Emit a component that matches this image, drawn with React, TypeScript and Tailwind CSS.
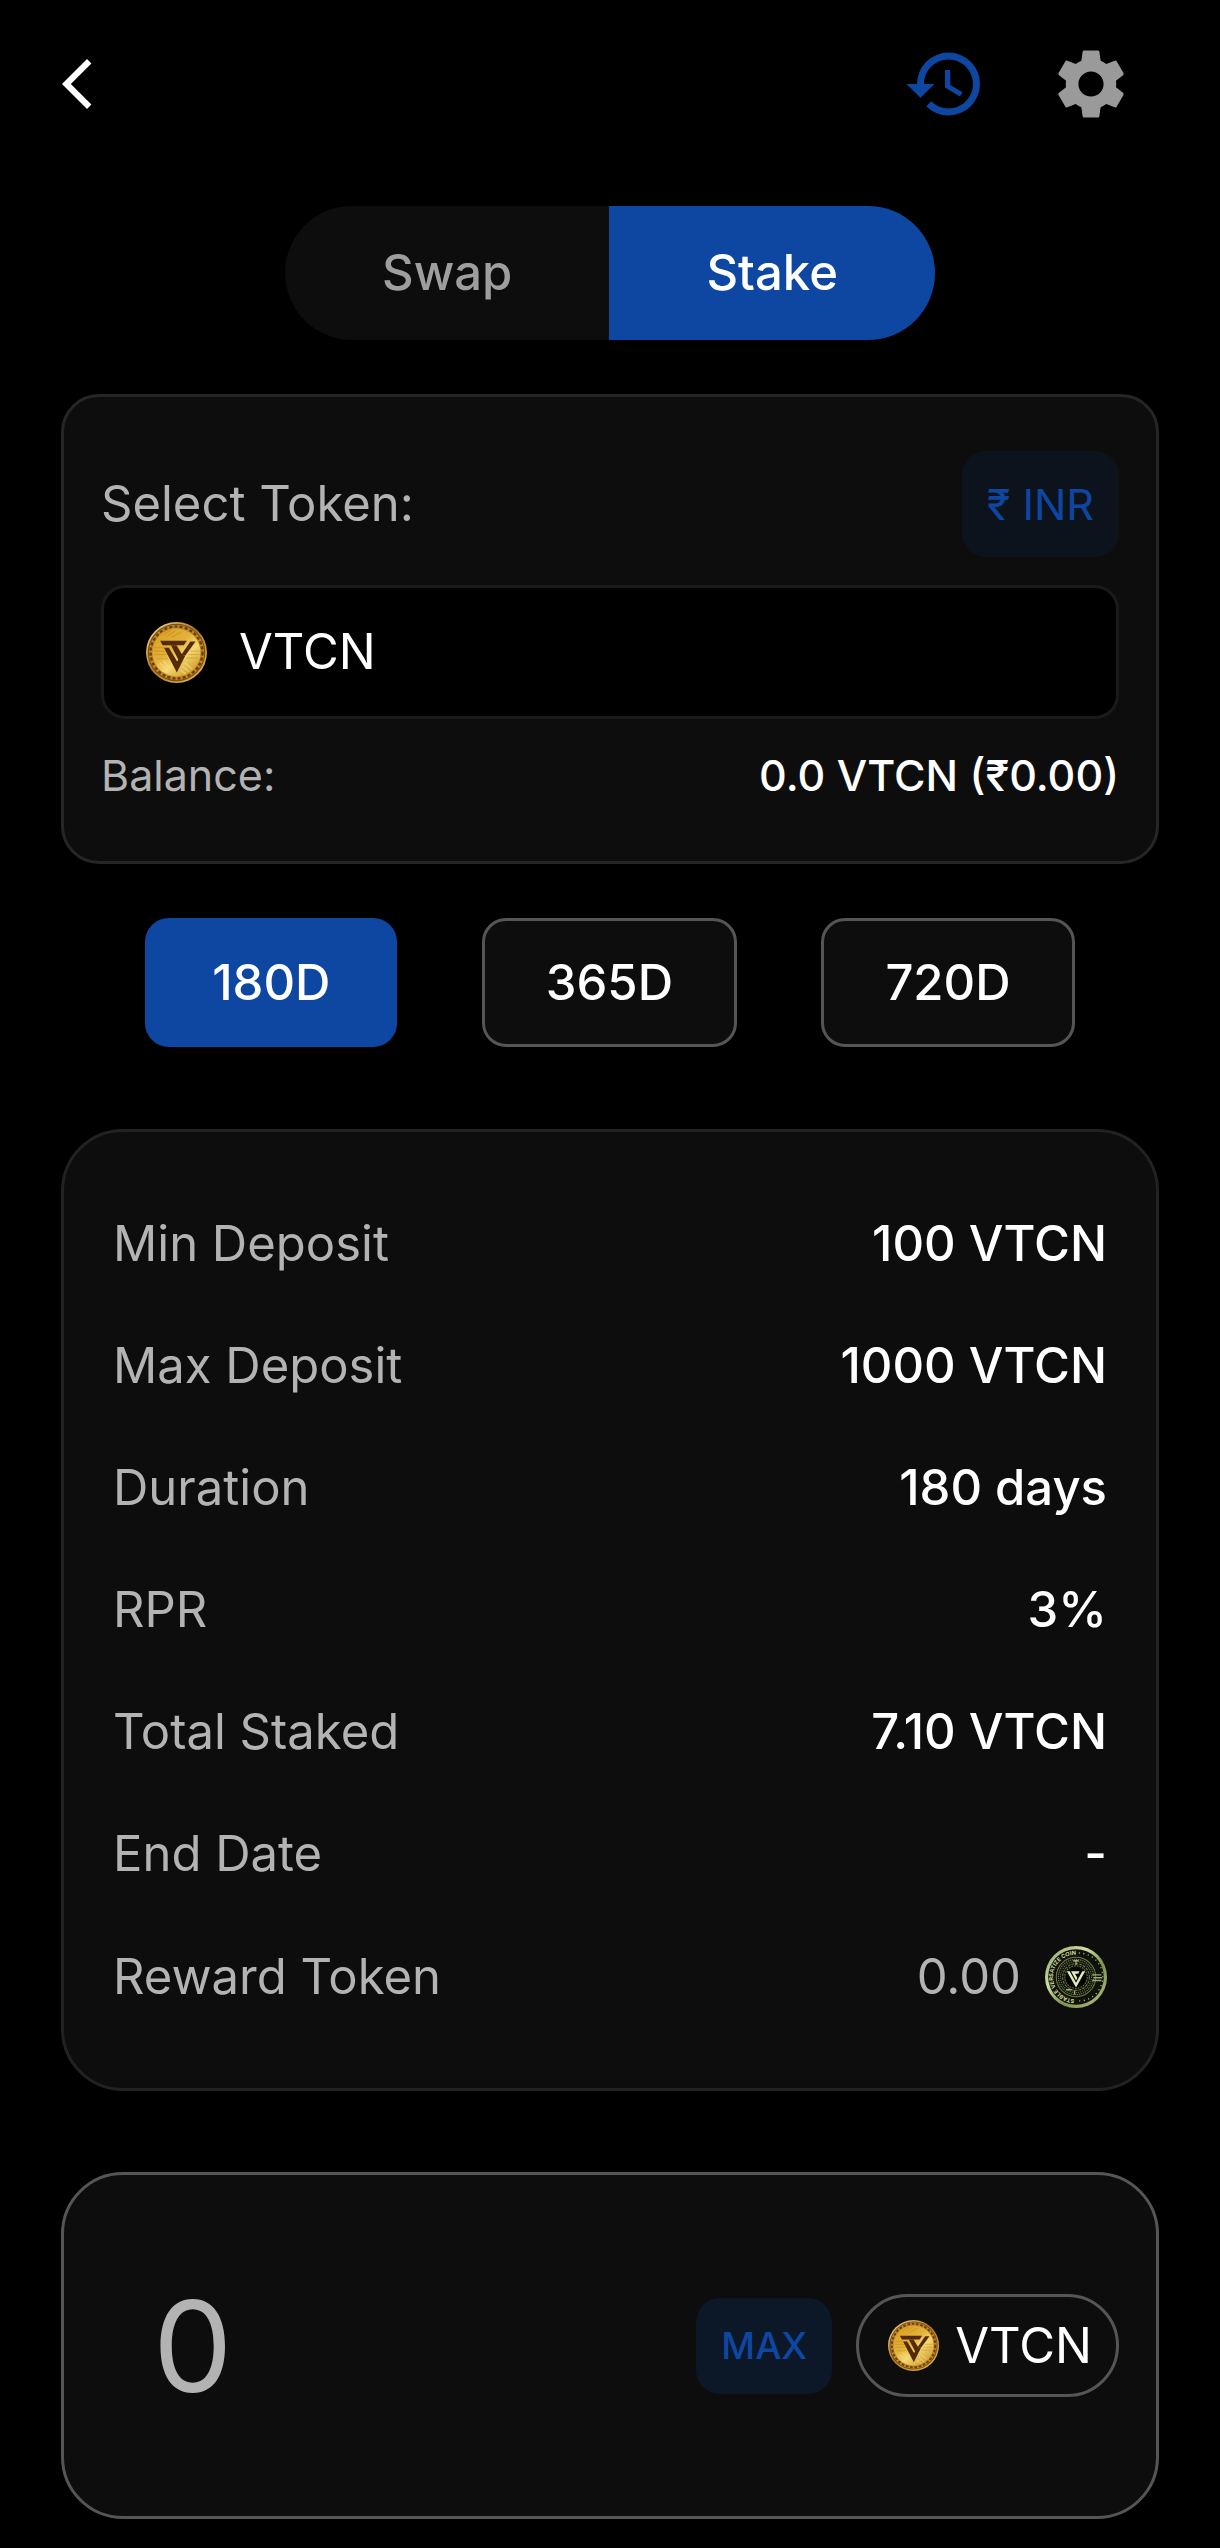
import React, { useId, useState } from "react";
import { MdArrowBackIosNew, MdHistory, MdSettings } from "react-icons/md";

function GoldCoin({ className }: { className: string }) {
  const id = useId();
  return (
    <svg viewBox="0 0 176 176" className={className} aria-hidden="true">
      <defs>
        <linearGradient id={`${id}rim`} x1="0" y1="0" x2="1" y2="1">
          <stop offset="0" stopColor="#fbe9a6" />
          <stop offset="0.45" stopColor="#b07a22" />
          <stop offset="1" stopColor="#e6bf62" />
        </linearGradient>
        <linearGradient id={`${id}face`} x1="0.1" y1="0" x2="0.9" y2="1">
          <stop offset="0" stopColor="#d9a021" />
          <stop offset="0.4" stopColor="#e3b13a" />
          <stop offset="0.62" stopColor="#f4d873" />
          <stop offset="1" stopColor="#c98f1b" />
        </linearGradient>
      </defs>
      <circle cx="88" cy="88" r="88" fill={`url(#${id}rim)`} />
      <circle cx="88" cy="88" r="83" fill="#7a4a10" />
      <circle cx="88" cy="88" r="80" fill="#c08a26" />
      <circle cx="88" cy="88" r="75" fill="none" stroke="#6b3f0c" strokeWidth="7" strokeDasharray="9 6" />
      <circle cx="88" cy="88" r="69" fill={`url(#${id}face)`} />
      <g fill="none" stroke="#b57d18" strokeWidth="2" opacity="0.6">
        <path d="M24 74h28M22 84h34M24 94h36M30 106h34M128 84h26M122 94h32M116 104h34" />
        <path d="M52 36l20-12M60 42l26-18M74 44l28-16" />
      </g>
      <path d="M112 118l22 18M106 128l18 16M100 138l14 12M40 118l22 22M50 112l20 24" stroke="#f8e391" strokeWidth="3" opacity="0.7" />
      <g fill="#552a06">
        <path d="M41 54H118L109 67H48Z" />
        <path d="M128 56H143L114 96H101Z" />
        <path d="M52 74H66L90 114L101 96H114L89 146Z" />
        <path d="M72 67H88L108 100L97 116Z" />
      </g>
    </svg>
  );
}

function GreenCoin({ className }: { className: string }) {
  const id = useId();
  return (
    <svg viewBox="0 0 176 176" className={className} aria-hidden="true">
      <defs>
        <linearGradient id={`${id}rim`} x1="0" y1="0" x2="1" y2="1">
          <stop offset="0" stopColor="#8c9a63" />
          <stop offset="0.35" stopColor="#d3dfa2" />
          <stop offset="0.6" stopColor="#7f9150" />
          <stop offset="1" stopColor="#b4c684" />
        </linearGradient>
        <path id={`${id}arc`} d="M84 151A63 63 0 0 1 88 25" />
      </defs>
      <circle cx="88" cy="88" r="88" fill={`url(#${id}rim)`} />
      <circle cx="88" cy="88" r="79" fill="#0f120b" />
      <text fill="#cddb9c" fontFamily="Inter, sans-serif" fontWeight="700" fontSize="16">
        <textPath href={`#${id}arc`}>STABLE VERSATIZE COIN</textPath>
      </text>
      <path d="M96 20A68 68 0 0 1 96 156" fill="none" stroke="#a9b87a" strokeWidth="4" strokeDasharray="3 10" />
      <g fill="none" stroke="#6b7749" strokeWidth="3">
        <circle cx="88" cy="88" r="56" />
        <circle cx="88" cy="88" r="50" strokeDasharray="4 2" />
        <circle cx="88" cy="88" r="44" strokeDasharray="3 3" />
        <circle cx="88" cy="88" r="38" strokeDasharray="8 3" />
        <circle cx="88" cy="88" r="32" strokeDasharray="5 3" />
      </g>
      <circle cx="88" cy="90" r="29" fill="#050604" />
      <path d="M80 42h16M88 42v12M134 82h26M138 90h24M134 98h26M60 124h16M84 126v12" stroke="#9dab70" strokeWidth="4" fill="none" />
      <g fill="#e2ecc0">
        <path d="M62 72H70L88 104L106 72H114L88 118Z" />
        <path d="M74 72H98L94 79H85L92 91L88 98Z" />
      </g>
    </svg>
  );
}

const plans = [180, 365, 720];

export default function App() {
  const [tab, setTab] = useState("Stake");
  const [plan, setPlan] = useState(180);
  const [amount, setAmount] = useState("");

  const details = [
    ["Min Deposit", "100 VTCN"],
    ["Max Deposit", "1000 VTCN"],
    ["Duration", `${plan} days`],
    ["RPR", "3%"],
    ["Total Staked", "7.10 VTCN"],
    ["End Date", "-"],
  ];

  return (
    <main className="min-h-screen bg-black px-[61px] pb-[30px] font-['Inter','Noto_Sans',sans-serif] text-[49px] leading-[60px] text-white">
      <header className="mr-[26px] -ml-[14px] flex items-center justify-between pt-[42px] pb-20">
        <button type="button" aria-label="Back">
          <MdArrowBackIosNew className="size-[60px]" />
        </button>
        <div className="flex gap-[62px]">
          <button type="button" aria-label="History" className="text-[#0d47a1]">
            <MdHistory className="size-[84px]" />
          </button>
          <button type="button" aria-label="Settings" className="text-[#9a9a9a]">
            <MdSettings className="size-[84px]" />
          </button>
        </div>
      </header>

      <div className="mx-auto flex w-[650px] max-w-full overflow-hidden rounded-full bg-[#0d0d0d]">
        {["Swap", "Stake"].map((name) => (
          <button
            key={name}
            type="button"
            aria-pressed={tab === name}
            onClick={() => setTab(name)}
            className={`h-[134px] flex-auto font-medium ${tab === name ? "bg-[#0d47a1] text-white" : "text-[#9e9e9e]"}`}
          >
            {name}
          </button>
        ))}
      </div>

      <section className="mt-[54px] rounded-[38px] border-3 border-[#262626] bg-[#0d0d0d] px-[37px] pt-[54px] pb-14">
        <div className="flex items-center justify-between">
          <h2 id="token-label" className="text-[#b3b3b3]">Select Token:</h2>
          <button type="button" className="h-[106px] rounded-3xl bg-[#0d131c] px-[25px] text-[43px] text-[#0d47a1]">
            ₹ INR
          </button>
        </div>
        <button
          type="button"
          aria-labelledby="token-label token-name"
          className="mt-7 flex h-[134px] w-full items-center gap-8 rounded-3xl border-3 border-[#1a1a1a] bg-black px-[42px]"
        >
          <GoldCoin className="size-[61px]" />
          <span id="token-name">VTCN</span>
        </button>
        <div className="mt-[26px] flex items-center justify-between text-[43px]">
          <span className="text-[#b3b3b3]">Balance:</span>
          <span className="font-medium">0.0 VTCN (₹0.00)</span>
        </div>
      </section>

      <div className="mt-[54px] flex flex-wrap justify-evenly">
        {plans.map((days) => (
          <button
            key={days}
            type="button"
            aria-pressed={plan === days}
            onClick={() => setPlan(days)}
            className={`h-[129px] min-w-[252px] rounded-3xl border-3 px-[61px] font-medium ${
              plan === days ? "border-[#0d47a1] bg-[#0d47a1]" : "border-[#555555] bg-[#0d0d0d]"
            }`}
          >
            {days}D
          </button>
        ))}
      </div>

      <dl className="mt-[82px] flex flex-col gap-[62px] rounded-[62px] border-3 border-[#222222] bg-[#0d0d0d] px-[49px] pt-[82px] pb-20">
        {details.map(([label, value]) => (
          <div key={label} className="flex items-center justify-between">
            <dt className="text-[#b3b3b3]">{label}</dt>
            <dd className="font-medium">{value}</dd>
          </div>
        ))}
        <div className="flex items-center justify-between text-[#b3b3b3]">
          <dt>Reward Token</dt>
          <dd className="flex items-center gap-6">
            0.00
            <GreenCoin className="size-[62px]" />
          </dd>
        </div>
      </dl>

      <section className="mt-[81px] flex h-[347px] items-center rounded-[62px] border-3 border-[#555555] bg-[#0d0d0d] pr-[37px] pl-[89px]">
        <input
          type="text"
          inputMode="decimal"
          aria-label="Amount to stake"
          placeholder="0"
          value={amount}
          onChange={(e) => setAmount(e.target.value)}
          className="h-40 min-w-0 flex-1 bg-transparent text-[126px] leading-none text-white outline-none placeholder:text-[#b3b3b3]"
        />
        <button
          type="button"
          onClick={() => setAmount("0.0")}
          className="h-24 rounded-3xl bg-[#0c1728] px-[25px] text-[37px] font-medium text-[#0d47a1]"
        >
          MAX
        </button>
        <button
          type="button"
          className="ml-6 flex h-[103px] items-center gap-4 rounded-full border-3 border-[#555555] pr-6 pl-[29px]"
        >
          <GoldCoin className="size-[51px]" />
          VTCN
        </button>
      </section>
    </main>
  );
}
